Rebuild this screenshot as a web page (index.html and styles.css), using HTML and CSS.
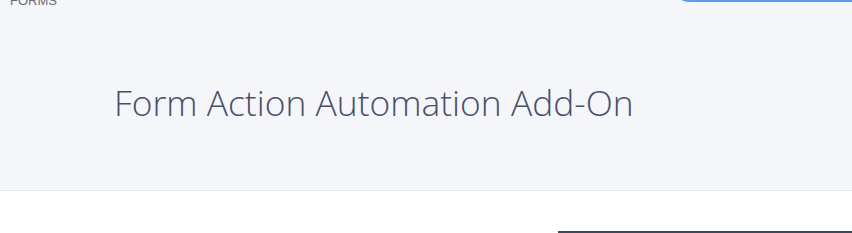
FILE: index.html
```html
<!DOCTYPE html>
<html lang="en">
<head>
    <meta charset="UTF-8">
    <meta name="viewport" content="width=device-width, initial-scale=1.0">
    <link rel="stylesheet" href="styles.css">
    <title>Form Action Automation Add-On</title>
</head>
<body>
    <div class="hero">
        <div class="topbar">
            <span class="crumb">FORMS</span>
            <div class="search-box"></div>
        </div>
        <h1 class="title">Form Action Automation Add-On</h1>
    </div>

    <div class="content">
        <div class="side-panel"></div>
    </div>
</body>
</html>
```

FILE: styles.css
```css
body {
    margin: 0;
    font-family: "Open Sans", Arial, sans-serif;
    background-color: #ffffff;
    overflow: hidden;
}

.hero {
    height: 190px;
    background-color: #f5f6fa;
    border-bottom: 1px solid #e7e7ee;
    overflow: hidden;
}

.topbar {
    display: flex;
    justify-content: space-between;
    align-items: flex-end;
    height: 36px;
    margin-top: -28px;
}

.crumb {
    margin-left: 10px;
    font-family: "Liberation Sans", Arial, sans-serif;
    font-size: 13px;
    color: #6b6b73;
    line-height: 14px;
}

.search-box {
    align-self: flex-start;
    width: 178px;
    height: 30px;
    border: 1px solid #5b9bea;
    border-bottom-width: 2px;
    border-right: none;
    border-radius: 18px 0 0 18px;
    background-color: #ffffff;
    box-sizing: border-box;
}

.title {
    margin: 72px 0 0 114px;
    font-size: 35.4px;
    font-weight: 300;
    color: #4b4f6a;
    line-height: 44px;
}

.content {
    display: flex;
    justify-content: flex-end;
    padding-top: 40px;
}

.side-panel {
    width: 294px;
    height: 1px;
    border-top: 2px solid #3d4959;
}
```
